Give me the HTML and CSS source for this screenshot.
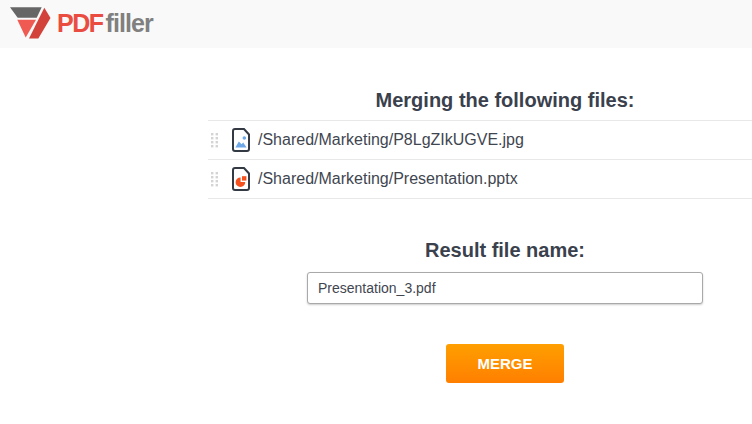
FILE: index.html
```html
<!DOCTYPE html>
<html lang="en">
<head>
<meta charset="utf-8">
<title>PDFfiller</title>
<link rel="stylesheet" href="styles.css">
</head>
<body>
<header class="topbar">
  <svg class="logo-mark" width="41" height="33" viewBox="10 6 41 33">
    <polygon points="10,7.3 41.7,7.3 36.7,17.7 17.7,17.7" fill="#666666"/>
    <polygon points="17.3,19.7 36,19.7 25.7,37.5" fill="#ef5b52"/>
    <polygon points="44.3,7.7 50.5,18 38.3,38.5 29,38.5" fill="#d2423a"/>
  </svg>
  <div class="brand"><span class="brand-pdf">PDF</span><span class="brand-filler">filler</span></div>
</header>
<main class="content">
  <h2 class="heading">Merging the following files:</h2>
  <ul class="files">
    <li class="file">
      <svg class="grip" width="8" height="15" viewBox="0 0 8 15"><g fill="#d4d4d4"><rect x="0" y="0" width="2.4" height="2.4"/><rect x="4.6" y="0" width="2.4" height="2.4"/><rect x="0" y="4" width="2.4" height="2.4"/><rect x="4.6" y="4" width="2.4" height="2.4"/><rect x="0" y="8" width="2.4" height="2.4"/><rect x="4.6" y="8" width="2.4" height="2.4"/><rect x="0" y="12" width="2.4" height="2.4"/><rect x="4.6" y="12" width="2.4" height="2.4"/></g></svg>
      <svg class="ficon" width="18" height="24" viewBox="0 0 18 24"><path d="M3 1h9l5 5.5V21a2 2 0 0 1-2 2H3a2 2 0 0 1-2-2V3a2 2 0 0 1 2-2z" fill="#fff" stroke="#343a44" stroke-width="2"/><path d="M3.4 19.5l3.4-6 2.8 2.8 1.6-1.8 3.4 5z" fill="#6fa8e8"/><circle cx="12.3" cy="10" r="1.8" fill="#6fa8e8"/></svg>
      <span class="path">/Shared/Marketing/P8LgZIkUGVE.jpg</span>
    </li>
    <li class="file">
      <svg class="grip" width="8" height="15" viewBox="0 0 8 15"><g fill="#d4d4d4"><rect x="0" y="0" width="2.4" height="2.4"/><rect x="4.6" y="0" width="2.4" height="2.4"/><rect x="0" y="4" width="2.4" height="2.4"/><rect x="4.6" y="4" width="2.4" height="2.4"/><rect x="0" y="8" width="2.4" height="2.4"/><rect x="4.6" y="8" width="2.4" height="2.4"/><rect x="0" y="12" width="2.4" height="2.4"/><rect x="4.6" y="12" width="2.4" height="2.4"/></g></svg>
      <svg class="ficon" width="18" height="24" viewBox="0 0 18 24"><path d="M3 1h9l5 5.5V21a2 2 0 0 1-2 2H3a2 2 0 0 1-2-2V3a2 2 0 0 1 2-2z" fill="#fff" stroke="#343a44" stroke-width="2"/><path d="M8.6 10.4V15H13.2A4.8 4.8 0 1 1 8.6 10.4z" fill="#f4511e"/><rect x="10" y="9.2" width="4.4" height="4.4" fill="#f4511e"/></svg>
      <span class="path">/Shared/Marketing/Presentation.pptx</span>
    </li>
  </ul>
  <h2 class="heading result-heading">Result file name:</h2>
  <input class="name-input" type="text" value="Presentation_3.pdf">
  <button class="merge" type="button">MERGE</button>
</main>
</body>
</html>
```
FILE: styles.css
```css
* { box-sizing: border-box; }
html, body { margin: 0; padding: 0; }
body {
  width: 752px;
  height: 424px;
  overflow: hidden;
  background: #fff;
  font-family: "Liberation Sans", Arial, sans-serif;
  color: #3b414b;
}
.topbar {
  height: 48px;
  background: #f9f9f9;
  display: flex;
  align-items: flex-start;
}
.logo-mark { margin: 6px 0 0 10px; flex: none; }
.brand {
  margin: 8px 0 0 6px;
  font-size: 25px;
  line-height: 30px;
  font-weight: 700;
}
.brand-pdf { color: #ea4c42; letter-spacing: -1.5px; margin-right: 3px; }
.brand-filler { color: #808080; letter-spacing: -0.9px; }
.content {
  margin-left: 208px;
  padding-left: 50px;
  display: flex;
  flex-direction: column;
  align-items: center;
}
.heading {
  margin: 41px 0 0;
  font-size: 20px;
  line-height: 22px;
  font-weight: 700;
  color: #3a414c;
  text-align: center;
}
.files {
  list-style: none;
  margin: 9px 0 0 -50px;
  padding: 0;
  width: 544px;
  border-top: 1px solid #e8e8e8;
}
.file {
  height: 39px;
  border-bottom: 1px solid #e8e8e8;
  display: flex;
  align-items: center;
  padding-left: 3px;
}
.grip { flex: none; }
.ficon { margin-left: 13px; flex: none; }
.path {
  margin-left: 8px;
  font-size: 16px;
  color: #3f4650;
}
.result-heading { margin-top: 40px; }
.name-input {
  margin-top: 11px;
  width: 396px;
  height: 32px;
  border: 1px solid #a9a9a9;
  border-radius: 3px;
  padding: 0 10px;
  font: 14px "Liberation Sans", Arial, sans-serif;
  color: #3f4650;
  box-shadow: 0 1px 2px rgba(0,0,0,.2);
  outline: none;
}
.merge {
  margin-top: 40px;
  width: 118px;
  height: 39px;
  border: 0;
  border-radius: 3px;
  background: linear-gradient(#ff9f00, #ff7f00);
  color: #fff;
  font: 700 15px "Liberation Sans", Arial, sans-serif;
}
```
